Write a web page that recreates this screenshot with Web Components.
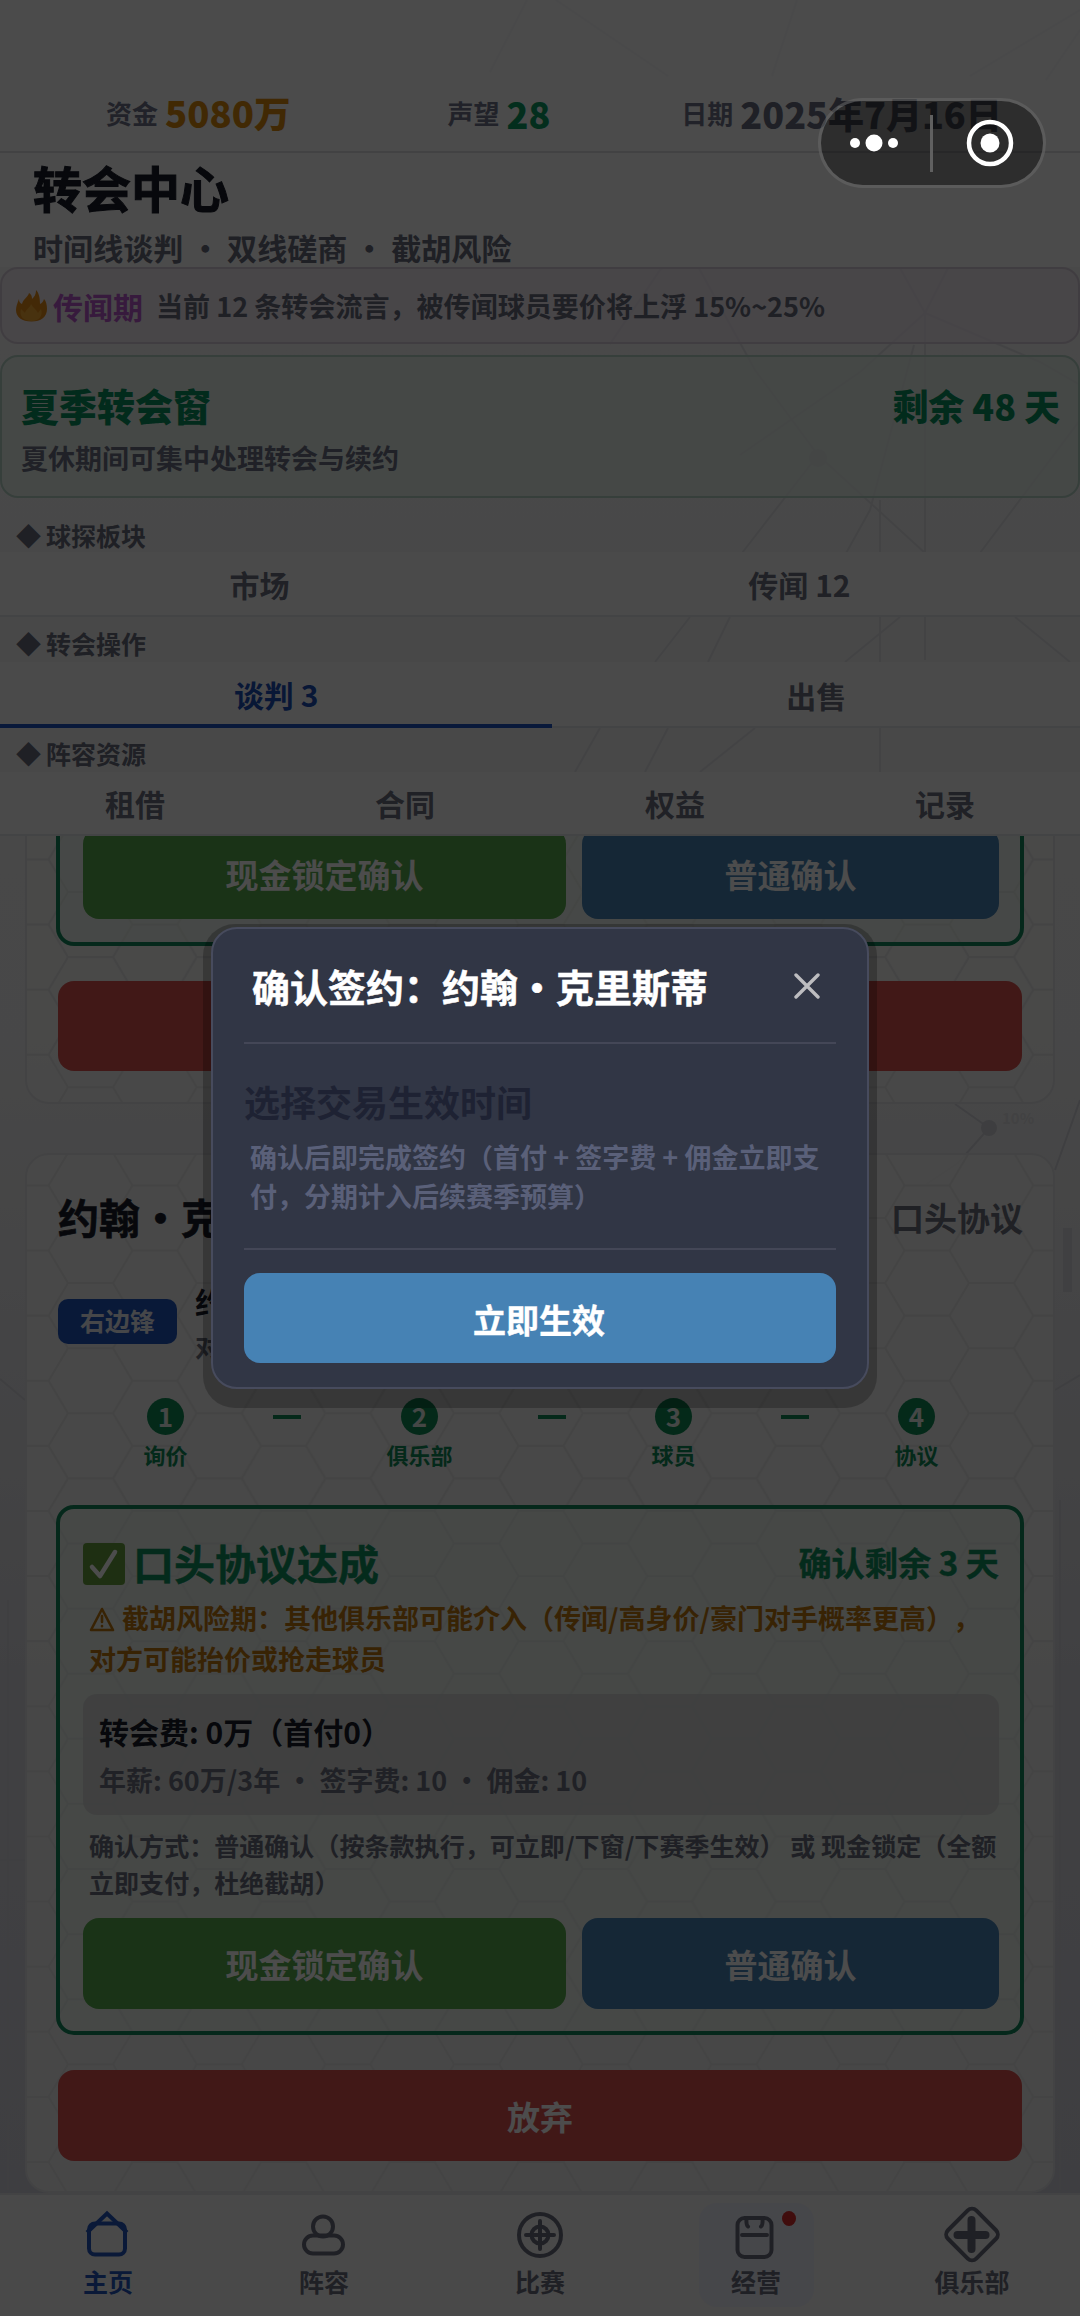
<!DOCTYPE html>
<html lang="zh-CN">
<head>
<meta charset="utf-8">
<title>转会中心</title>
<style>
html,body{margin:0;padding:0}
body{width:1080px;height:2316px;overflow:hidden;font-family:"Noto Sans CJK SC",sans-serif;font-weight:700;text-spacing-trim:space-all;color:#1c1f2c;background:#f4f4f4}
</style>
</head>
<body>
<transfer-app></transfer-app>
<script>
const define=(name,css,html)=>customElements.define(name,class extends HTMLElement{
  constructor(){
    super();
    const t=document.createElement('template');
    t.innerHTML='<style>*{box-sizing:border-box}b{font-weight:700}:host{display:block;box-sizing:border-box}'+css+'</style>'+(typeof html==='function'?html(this):html);
    this.attachShadow({mode:'open'}).appendChild(t.content.cloneNode(true));
  }
});

/* Faint decorative network lines behind the content */
define('tech-backdrop',`:host{position:absolute;inset:0;pointer-events:none}svg{display:block}`,`
<svg width="1080" height="2316" viewBox="0 0 1080 2316" fill="none">
 <defs><linearGradient id="g" x1="0" y1="0" x2="0" y2="1"><stop offset="0" stop-color="#f5f5f5"/><stop offset=".45" stop-color="#efeff0"/><stop offset=".72" stop-color="#d8d8de"/><stop offset="1" stop-color="#cfcfda"/></linearGradient></defs>
 <rect width="1080" height="2316" fill="url(#g)"/>
 <g stroke="#e0e1e5" stroke-width="2">
  <path d="M527 0L490 72M556 0L668 76M797 0L772 76M1080 10L970 76M1080 30L1046 80"/>
  <path d="M690 252L660 270L610 344M690 252L755 370L818 455L925 553M900 268L925 313L1040 362L1080 385M925 313L860 372L740 455M948 268L925 313V553M914 345L870 510L820 600M1080 420L980 553M818 455L742 553M880 500V830M925 617V660M690 617L655 662M730 617L708 662M900 617L845 662M1015 617L1070 662M600 728L575 772M668 728L645 772M755 728L700 772"/>
  <path d="M0 1379L25 1400M1080 1100L1055 1170M1055 1390L1080 1375M989 1128L955 1104M989 1128L958 1163L925 1185M1060 1500V2190M8 1600V2190M0 1860H25M1055 2060H1080" stroke="#d3d3da"/>
 </g>
 <circle cx="818" cy="458" r="9" fill="#dddee6"/><circle cx="989" cy="1128" r="8" fill="#cfd0d6"/>
 <text x="1002" y="1124" font-size="15" fill="#dcdce0">10%</text>
 <rect x="1063" y="1228" width="9" height="64" fill="#d6d7dc"/>
</svg>`);

define('hex-texture',`:host{position:absolute;inset:0;overflow:hidden;border-radius:inherit;pointer-events:none}svg{display:block;width:100%;height:100%}`,el=>{
  const y=el.getAttribute('oy')||0,id='h'+y;
  return `<svg><defs><pattern id="${id}" width="128.7" height="65.1" patternUnits="userSpaceOnUse" x="41" y="${y}"><path d="M0 0H45L64.4 32.55L45 65.1H0M64.4 32.55H109.3L128.7 0M109.3 32.55L128.7 65.1" fill="none" stroke="#e3e3e3" stroke-width="2"/></pattern></defs><rect width="100%" height="100%" fill="url(#${id})"/></svg>`;});

define('status-item',`:host{display:flex;align-items:center;gap:7px;font-size:26px;line-height:40px;color:#70748a;white-space:nowrap}::slotted(b){font-size:36px}`,`<span><slot name="label"></slot></span><slot></slot>`);

define('status-bar',`:host{height:153px;padding:75px 0 0 106px;display:flex;align-items:center;background:rgba(251,251,251,.8);border-bottom:2px solid #dcdde0}
 b{font-weight:900}status-item:nth-of-type(2){margin-left:159px}status-item:nth-of-type(3){margin-left:131px}`,`
 <status-item><span slot="label">资金</span><b style="color:#d98a10;font-size:36.500px;margin-right:-2px">5080万</b></status-item>
 <status-item><span slot="label">声望</span><b style="color:#0c9a62">28</b></status-item>
 <status-item><span slot="label">日期</span><b style="color:#686c80">2025年7月16日</b></status-item>`);

define('page-title',`:host{height:114px;padding:9px 33px 0;display:flex;flex-direction:column;gap:15px;background:#fafafa}
 h1{margin:0;font-size:49px;line-height:50px;color:#181b28;-webkit-text-stroke:1px #181b28}p{margin:0;font-size:30.080px;line-height:40px;color:#686c7c}`,`
 <h1>转会中心</h1><p>时间线谈判 · 双线磋商 · 截胡风险</p>`);

define('rumor-banner',`:host{height:77px;display:flex;align-items:center;padding:0 14px;border:2px solid #d8ced9;border-radius:18px;background:rgba(240,229,240,.72)}
 svg{flex:none}b{font-size:30px;color:#b957cb;margin-left:6px;line-height:44px}span{font-size:27.050px;margin-left:13px;color:#686c7c;white-space:nowrap}`,`
 <svg width="31" height="32" viewBox="0 0 31 32"><path d="M3 9C1 14 0 17 0 20C0 27 6 31.500 15.500 31.500S31 27 31 19C31 15 30 11 28 9C27 12 26 13 24 14C24 8 23 3 20 0C20 5 18 7 16 9C16 6 15 4 13 3C12 7 7 9 6 14C4 13 3 12 3 9Z" fill="#e28a18"/><path d="M15 14C17 18 20 19 22 23L25 19C27 25 24 31 15.500 31S3 26 5 19L9 23C10 19 14 18 15 14Z" fill="#f0a935"/></svg>
 <b>传闻期</b><span>当前 12 条转会流言，被传闻球员要价将上浮 15%~25%</span>`);

define('window-card',`:host{height:143px;margin-top:11px;padding:23px 18px 0 19px;border:2px solid #b6d2c6;border-radius:18px;background:rgba(228,239,232,.75)}
 .r{display:flex;justify-content:space-between;align-items:center;height:50px;color:#07925e}.r b{font-weight:900}.r b:first-child{font-size:38px;margin-top:-1px}.r b:last-child{font-size:35.850px}
 p{margin:8px 0 0;font-size:27px;line-height:40px;color:#6b7183}`,`
 <div class="r"><b>夏季转会窗</b><b>剩余 48 天</b></div><p>夏休期间可集中处理转会与续约</p>`);

define('tab-item',`:host{flex:1 1 auto;display:flex;align-items:center;justify-content:center;font-size:30px;color:#6c7080;border-bottom:2px solid #e2e3e6;padding-top:1px}
 :host([grid]){flex:1 1 0;padding-top:0}:host([active]){color:#1c4eb4;border-bottom:4px solid #1f55c4;padding-top:2px}`,`<slot></slot>`);

define('tab-group',`:host{display:flex;flex-direction:column}
 .l{height:var(--lh,45px);display:flex;align-items:flex-end;gap:5px;padding:0 16px var(--lp,4px);font-size:25px;line-height:30px;color:#686c7c}
 .t{display:flex;height:var(--th,65px);background:#f9f9f9}`,`
 <div class="l"><span>◆</span><slot name="label"></slot></div><div class="t"><slot></slot></div>`);

define('action-button',`:host{height:91px;display:flex;align-items:center;justify-content:center;border-radius:16px;background:var(--bg);color:#fff;font-size:33px;line-height:48px}`,`<slot></slot>`);

define('step-dot',`:host{display:flex;flex-direction:column;align-items:center;font-size:22px;color:#108b58}
 i{font-style:normal;width:37px;height:37px;border-radius:50%;background:#0f8a55;color:#e6eee9;font-size:26px;line-height:35px;text-align:center}span{line-height:30px;margin-top:4px}`,el=>`<i>${el.getAttribute('n')||''}</i><span><slot></slot></span>`);

define('step-track',`:host{display:flex;justify-content:space-evenly;height:76px;margin-right:-2px}hr{margin:17px 0 0;border:0;width:28px;height:4px;background:#128a58}`,`
 <step-dot n="1">询价</step-dot><hr><step-dot n="2">俱乐部</step-dot><hr><step-dot n="3">球员</step-dot><hr><step-dot n="4">协议</step-dot>`);

define('button-pair',`:host{display:flex;gap:16px}.a{width:483px;--bg:#57aa4d}.b{flex:1;--bg:#4682b4}`,`
 <action-button class="a">现金锁定确认</action-button><action-button class="b">普通确认</action-button>`);

define('agreement-panel',`:host{margin:0 -2px;border:4px solid #12885b;border-radius:18px;padding:32px 21px 22px 23px;height:530px;background:rgba(225,240,228,.36);display:flex;flex-direction:column}
 .h{display:flex;align-items:center;height:48px;color:#0f8f5e;font-size:33px}.h svg{margin-top:-3px}.h b{font-size:41px;margin:-7px 0 0 8px;-webkit-text-stroke:.5px #0f8f5e}.h span{font-size:33.200px;margin:-7px 0 0 auto;-webkit-text-stroke:.4px #0f8f5e}
 .w{margin:9px 0 0 6px;font-size:27px;line-height:40.500px;color:#bd760e;white-space:nowrap}.w svg{vertical-align:-3px;margin-right:7px}
 .f{margin-top:15px;height:121px;border-radius:14px;background:rgba(205,208,208,.75);padding:16px 16px 0;white-space:nowrap}
 .f p{margin:0;font-size:30px;line-height:42px;color:#181b28}.f p+p{font-size:27px;line-height:40px;margin-top:8px;color:#6c7180}
 .n{margin:12px 0 0 6px;font-size:25.050px;line-height:37.300px;color:#686d7c;white-space:nowrap}button-pair{margin-top:auto}`,`
 <div class="h"><svg width="42" height="42" viewBox="0 0 42 42"><rect width="42" height="42" rx="4" fill="#679f3c"/><path d="M9 24L17 33L32 9" fill="none" stroke="#fff" stroke-width="4.500" stroke-linecap="round" stroke-linejoin="round"/></svg><b>口头协议达成</b><span>确认剩余 3 天</span></div>
 <div class="w"><svg width="26" height="25" viewBox="0 0 26 25" fill="none" stroke="#bd760e" stroke-width="2.600" stroke-linejoin="round" stroke-linecap="round"><path d="M13 2L24 23H2Z"/><path d="M13 9V15M13 19V19.200"/></svg>截胡风险期：其他俱乐部可能介入（传闻/高身价/豪门对手概率更高），<br>对方可能抬价或抢走球员</div>
 <div class="f"><p>转会费: 0万（首付0）</p><p>年薪: 60万/3年 · 签字费: 10 · 佣金: 10</p></div>
 <div class="n">确认方式：普通确认（按条款执行，可立即/下窗/下赛季生效） 或 现金锁定（全额<br>立即支付，杜绝截胡）</div>
 <button-pair></button-pair>`);

define('previous-card',`:host{position:relative;height:268px;margin:0 25px;padding:0 33px;border:2px solid #e0e1e3;border-top:0;border-radius:0 0 24px 24px;background:rgba(245,245,244,.6);overflow:hidden;display:flex;flex-direction:column}
 .p{position:relative;margin:0 -4px;height:110px;border:4px solid #12885b;border-top:0;border-radius:0 0 18px 18px;background:rgba(225,240,228,.36);padding:0 21px 0 23px}
 button-pair{margin-top:-8px}.r{position:relative;--bg:#d9534f;height:90px;margin:35px -2px 0}`,`
 <hex-texture oy="56"></hex-texture><div class="p"><button-pair></button-pair></div><action-button class="r"></action-button>`);

define('deal-card',`:host{position:relative;height:1040px;margin:49px 25px 0;padding:38px 31px 0;border:2px solid #e0e1e3;border-radius:24px;background:rgba(243,243,242,.85);display:flex;flex-direction:column}
 :host>div,step-track,agreement-panel,action-button{position:relative}
 .h{display:flex;justify-content:space-between;align-items:center;height:48px;font-size:33px;line-height:44px;color:#6b6f7e}.h b{font-size:41px;color:#181b28;-webkit-text-stroke:.6px #181b28;margin-top:-2px}.h span{margin:0 -1px 0 0}
 .p{display:flex;align-items:center;margin-top:36px;height:92px;gap:18px}
 .tag{width:119px;height:45px;border-radius:10px;background:#2054bd;color:#eceef4;font-size:25px;line-height:43px;text-align:center;margin-top:-4px}
 .m b{display:block;font-size:30px;line-height:45px;color:#181b28}.m span{display:block;font-size:26px;line-height:44px;color:#6b6f7e}
 step-track{margin-top:29px}agreement-panel{margin-top:31px}.x{--bg:#d9534f;margin-top:35px}`,`
 <hex-texture oy="63"></hex-texture>
 <div class="h"><b>约翰・克里斯蒂</b><span>口头协议</span></div>
 <div class="p"><div class="tag">右边锋</div><div class="m"><b>约翰</b><span>对</span></div></div>
 <step-track></step-track><agreement-panel></agreement-panel><action-button class="x">放弃</action-button>`);

define('nav-item',`:host{flex:1;display:flex;justify-content:center;padding-top:8px}
 .b{position:relative;width:115px;height:104px;border-radius:18px;display:flex;flex-direction:column;align-items:center;color:#6a6d7e;font-size:25px;line-height:34px}
 :host([tint]) .b{background:#eceef8}:host([active]) .b{color:#2456bd}
 ::slotted(svg){display:block;width:64px;height:64px;margin-bottom:-3px;fill:none;stroke:currentColor;stroke-width:4;stroke-linecap:round}
 i{display:none;position:absolute;right:18px;top:8px;width:14px;height:15px;border-radius:50%;background:#d52d2d}:host([tint]) i{display:block}`,`<div class="b"><slot name="icon"></slot><span><slot></slot></span><i></i></div>`);

define('bottom-nav',`:host{display:flex;position:relative;height:123px;background:#f3f3f3;border-top:2px solid #e0e0e4}`,`
 <nav-item active><svg slot="icon" viewBox="0 0 64 64"><rect x="13" y="20.500" width="36" height="31" rx="6"/><path d="M11 29.500L31 10.500L51 29.500" stroke-linecap="butt"/></svg>主页</nav-item>
 <nav-item><svg slot="icon" viewBox="0 0 64 64"><circle cx="31" cy="23.500" r="10"/><rect x="12" y="32.500" width="39" height="18" rx="9"/></svg>阵容</nav-item>
 <nav-item><svg slot="icon" viewBox="0 0 64 64"><circle cx="32" cy="32" r="21"/><circle cx="32" cy="32" r="8.500"/><path d="M18 32H46M32 18V46"/></svg>比赛</nav-item>
 <nav-item tint><svg slot="icon" viewBox="0 0 64 64"><rect x="13.500" y="15" width="34" height="39" rx="7"/><path d="M18 32H43M24 23.500Q22 22 22.500 16M37 23.500Q39 22 38.500 16"/></svg>经营</nav-item>
 <nav-item><svg slot="icon" viewBox="0 0 64 64"><rect x="12" y="11.500" width="40" height="40" rx="6" transform="rotate(45 32 31.500)"/><path d="M17.500 32H45.500M31.500 17V46" stroke-width="8"/></svg>俱乐部</nav-item>`);

define('wx-capsule',`:host{position:absolute;left:818px;top:98px;width:228px;height:90px;border:3px solid rgba(255,255,255,.22);border-radius:45px;background:rgba(0,0,0,.4)}svg{display:block;margin:-3px}`,`
 <svg width="228" height="90" viewBox="0 0 228 90"><g fill="#fff"><circle cx="37" cy="45" r="5"/><circle cx="56" cy="45" r="8.500"/><circle cx="75" cy="45" r="5"/><circle cx="172" cy="45" r="9.500"/></g><circle cx="172" cy="45" r="21" fill="none" stroke="#fff" stroke-width="4.500"/><path d="M113.500 17V74" stroke="#606060" stroke-width="3"/></svg>`);

define('sign-dialog',`:host{position:absolute;left:211px;top:927px;width:658px;height:462px}
 :host::before{content:"";position:absolute;inset:-3px -8px -19px;border-radius:32px;background:rgba(0,0,0,.23)}
 .d{position:relative;height:100%;border:2px solid #474b5d;border-radius:26px;background:#313645;padding:0 31px;display:flex;flex-direction:column}
 .h{height:115px;display:flex;align-items:center;justify-content:space-between;padding:0 16px 0 8px;border-bottom:2px solid #444757;font-size:38px;color:#fff;white-space:nowrap;-webkit-text-stroke:.5px #fff}
 .t{height:206px;border-bottom:2px solid #444757;padding-top:33px}
 h2{margin:0;font-size:36px;line-height:48px;color:#1e2233}p{margin:12px 0 0 6px;font-size:27px;line-height:39px;color:#5a6079;white-space:nowrap}
 action-button{--bg:#4682b4;height:90px;margin-top:23px;padding:2px 2px 0 0;-webkit-text-stroke:.4px #fff}`,`
 <div class="d"><div class="h"><span>确认签约：约翰・克里斯蒂</span><svg width="26" height="26" viewBox="0 0 26 26" stroke="#bdbdc0" stroke-width="3.400" stroke-linecap="round"><path d="M2 2L24 24M24 2L2 24"/></svg></div>
 <div class="t"><h2>选择交易生效时间</h2><p>确认后即完成签约（首付 + 签字费 + 佣金立即支<br>付，分期计入后续赛季预算）</p></div>
 <action-button>立即生效</action-button></div>`);

define('transfer-app',`:host{position:relative;width:1080px;height:2316px;overflow:hidden}
 .page{position:relative;display:flex;flex-direction:column;height:100%}
 .list{height:1357px;overflow:hidden}.g1{--lh:54px;--lp:2px;--th:65px}.g2{--th:66px}.g3{--lh:44px;--th:64px}
 .mask{position:absolute;inset:0;background:rgba(0,0,0,.7)}`,`
 <tech-backdrop></tech-backdrop>
 <div class="page">
  <status-bar></status-bar><page-title></page-title><rumor-banner></rumor-banner><window-card></window-card>
  <tab-group class="g1"><span slot="label">球探板块</span><tab-item>市场</tab-item><tab-item>传闻 12</tab-item></tab-group>
  <tab-group class="g2"><span slot="label">转会操作</span><tab-item active>谈判 3</tab-item><tab-item>出售</tab-item></tab-group>
  <tab-group class="g3"><span slot="label">阵容资源</span><tab-item grid>租借</tab-item><tab-item grid>合同</tab-item><tab-item grid>权益</tab-item><tab-item grid>记录</tab-item></tab-group>
  <div class="list"><previous-card></previous-card><deal-card></deal-card></div>
  <bottom-nav></bottom-nav>
 </div>
 <div class="mask"></div><wx-capsule></wx-capsule><sign-dialog></sign-dialog>`);
</script>
</body>
</html>
